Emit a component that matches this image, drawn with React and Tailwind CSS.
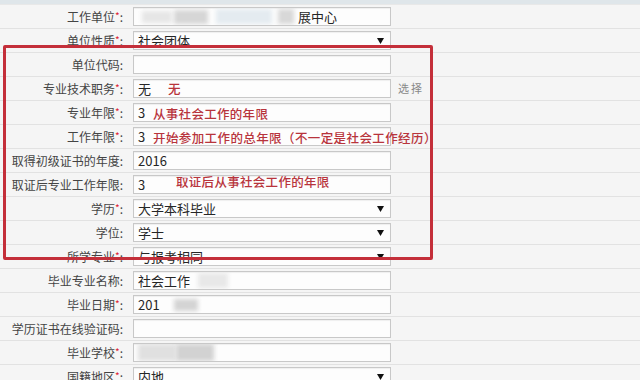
import React from 'react';

const font = { fontFamily: '"Noto Sans CJK SC", "Liberation Sans", sans-serif' };

function Arrow() {
    return (
        <svg width="7" height="6" viewBox="0 0 7 6" className="ml-auto mr-[6px] shrink-0">
            <path d="M0 0 L7 0 L3.5 6 Z" fill="#111" />
        </svg>
    );
}

function Field({ value, select, children }) {
    return (
        <div className="h-[19px] w-[258px] border border-[#c8c8c8] bg-[#fdfdfd] shadow-[inset_0_1px_1px_rgba(0,0,0,0.06)] flex items-center pl-[4px] text-[13px] text-[#262626] overflow-hidden">
            {value && <span>{value}</span>}
            {children}
            {select && <Arrow />}
        </div>
    );
}

function Blur({ className }) {
    return <div className={'shrink-0 blur-[2px] ' + className} />;
}

function Row({ label, star, value, select, extra, note, children }) {
    return (
        <div className="relative h-6 border-b border-[#e2e2e2] flex items-center">
            <div className="w-[123px] text-right text-[12px] text-[#444] whitespace-nowrap">
                {label}
                {star && <span className="text-[#d23] text-[10px] align-top">*</span>}
                :
            </div>
            <div className="ml-[10px]">
                <Field value={value} select={select}>{children}</Field>
            </div>
            {extra}
            {note}
        </div>
    );
}

function Note({ className, children }) {
    return (
        <span className={'absolute text-[12.5px] font-medium text-[#b8343c] whitespace-nowrap ' + className}>
            {children}
        </span>
    );
}

export default function App() {
    return (
        <div className="relative w-[640px] h-[380px] overflow-hidden bg-[#f5f5f5]" style={font}>
            <div className="h-[5px] bg-[#dfe6ea] border-b border-[#e8e8e8]" />

            <Row label="工作单位" star>
                <div className="flex items-center gap-[2px] h-full">
                    <Blur className="w-[30px] h-[12px] bg-[#e6e6e6] ml-[4px]" />
                    <Blur className="w-[34px] h-[14px] bg-[#d6d6d6]" />
                    <Blur className="w-[56px] h-[15px] bg-[#e4ebf0] ml-[6px]" />
                    <Blur className="w-[16px] h-[15px] bg-[#d8d8d8] ml-[4px]" />
                </div>
                <span className="ml-[4px]">展中心</span>
            </Row>
            <Row label="单位性质" star value="社会团体" select />
            <Row label="单位代码" />
            <Row
                label="专业技术职务"
                star
                value="无"
                extra={<span className="ml-[7px] text-[11px] text-[#888] tracking-[2px]">选择</span>}
                note={<Note className="left-[168px] top-[3px] tracking-[0.3px]">无</Note>}
            />
            <Row label="专业年限" star value="3" note={<Note className="left-[153px] top-[4px] tracking-[0.3px]">从事社会工作的年限</Note>} />
            <Row
                label="工作年限"
                star
                value="3"
                note={<Note className="left-[153px] top-[4px] tracking-[0.4px]">开始参加工作的总年限（不一定是社会工作经历）</Note>}
            />
            <Row label="取得初级证书的年度" value="2016" />
            <Row label="取证后专业工作年限" value="3" note={<Note className="left-[176px] top-[0px] tracking-[0.3px]">取证后从事社会工作的年限</Note>} />
            <Row label="学历" star value="大学本科毕业" select />
            <Row label="学位" value="学士" select />
            <Row label="所学专业" star value="与报考相同" select />
            <Row label="毕业专业名称" value="社会工作">
                <Blur className="w-[30px] h-[15px] bg-[#e8e8e8] ml-[8px]" />
            </Row>
            <Row label="毕业日期" star value="201">
                <Blur className="w-[24px] h-[12px] bg-[#d4d4d4] ml-[14px]" />
            </Row>
            <Row label="学历证书在线验证码" />
            <Row label="毕业学校" star>
                <Blur className="w-[38px] h-[17px] bg-[#e0e0e0]" />
                <Blur className="w-[38px] h-[17px] bg-[#d2d2d2]" />
            </Row>
            <Row label="国籍地区" star value="内地" select />

            <div className="absolute left-[3px] top-[45px] w-[430px] h-[215px] border-[3px] border-[#c42f3a] rounded-[2px] pointer-events-none" />
        </div>
    );
}
